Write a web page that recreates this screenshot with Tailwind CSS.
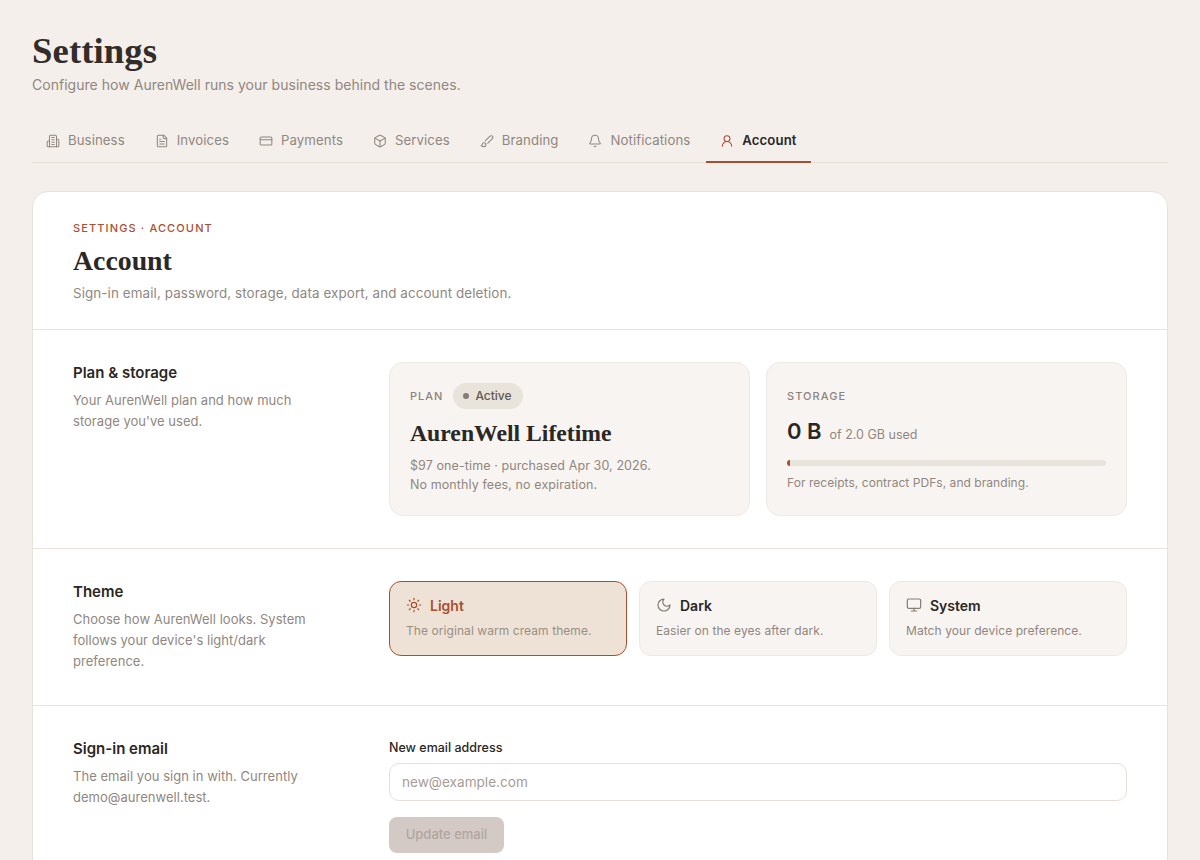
<!DOCTYPE html>
<html lang="en">
<head>
<meta charset="utf-8">
<title>Settings</title>
<script src="https://cdn.jsdelivr.net/npm/@tailwindcss/browser@4"></script>
</head>
<body class="bg-[#f4efeb] font-['Inter','Noto_Sans',sans-serif] text-[#2b2724] overflow-hidden h-[860px]">
<main class="px-8 pt-[33px]">
  <h1 class="font-['Liberation_Serif',serif] font-bold text-[36.700px] leading-[36px] tracking-[0.1px] text-[#332d29]">Settings</h1>
  <p class="mt-[6px] text-[14px] leading-[20px] tracking-[0.03px] text-[#90877f]">Configure how AurenWell runs your business behind the scenes.</p>

  <nav class="mt-[24px] flex gap-[2px] h-[44px] border-b border-[#e6e0d9] text-[13.200px] tracking-[0.09px] text-[#90877f]">
    <a class="flex items-center gap-[8px] px-[14px]">
      <svg class="size-[14px]" viewBox="0 0 24 24" fill="none" stroke="currentColor" stroke-width="1.8" stroke-linecap="round" stroke-linejoin="round"><path d="M6 22V4a2 2 0 0 1 2-2h8a2 2 0 0 1 2 2v18Z"/><path d="M6 12H4a2 2 0 0 0-2 2v6a2 2 0 0 0 2 2h2"/><path d="M18 9h2a2 2 0 0 1 2 2v9a2 2 0 0 1-2 2h-2"/><path d="M10 6h4M10 10h4M10 14h4M10 18h4"/></svg>
      <span>Business</span></a>
    <a class="flex items-center gap-[8px] px-[14px]">
      <svg class="size-[14px]" viewBox="0 0 24 24" fill="none" stroke="currentColor" stroke-width="1.8" stroke-linecap="round" stroke-linejoin="round"><path d="M15 2H6a2 2 0 0 0-2 2v16a2 2 0 0 0 2 2h12a2 2 0 0 0 2-2V7Z"/><path d="M14 2v4a2 2 0 0 0 2 2h4"/><path d="M10 9H8M16 13H8M16 17H8"/></svg>
      <span>Invoices</span></a>
    <a class="flex items-center gap-[8px] px-[14px]">
      <svg class="size-[14px]" viewBox="0 0 24 24" fill="none" stroke="currentColor" stroke-width="1.8" stroke-linecap="round" stroke-linejoin="round"><rect x="2" y="5" width="20" height="14" rx="2"/><path d="M2 10h20"/></svg>
      <span>Payments</span></a>
    <a class="flex items-center gap-[8px] px-[14px]">
      <svg class="size-[14px]" viewBox="0 0 24 24" fill="none" stroke="currentColor" stroke-width="1.8" stroke-linecap="round" stroke-linejoin="round"><path d="M21 8a2 2 0 0 0-1-1.730l-7-4a2 2 0 0 0-2 0l-7 4A2 2 0 0 0 3 8v8a2 2 0 0 0 1 1.730l7 4a2 2 0 0 0 2 0l7-4A2 2 0 0 0 21 16Z"/><path d="m3.300 7 8.700 5 8.700-5"/><path d="M12 22V12"/></svg>
      <span>Services</span></a>
    <a class="flex items-center gap-[8px] px-[14px]">
      <svg class="size-[14px]" viewBox="0 0 24 24" fill="none" stroke="currentColor" stroke-width="1.8" stroke-linecap="round" stroke-linejoin="round"><path d="m9.060 11.900 8.070-8.060a2.850 2.850 0 1 1 4.030 4.030l-8.060 8.080"/><path d="M7.070 14.940c-1.660 0-3 1.350-3 3.020 0 1.330-2.500 1.520-2 2.020 1.080 1.100 2.490 2.020 4 2.020 2.200 0 4-1.800 4-4.040a3.010 3.010 0 0 0-3-3.020z"/></svg>
      <span>Branding</span></a>
    <a class="flex items-center gap-[8px] px-[14px]">
      <svg class="size-[14px]" viewBox="0 0 24 24" fill="none" stroke="currentColor" stroke-width="1.8" stroke-linecap="round" stroke-linejoin="round"><path d="M10.300 21a2 2 0 0 0 3.400 0"/><path d="M3.300 15.300A1 1 0 0 0 4 17h16a1 1 0 0 0 .7-1.700C19.400 14 18 12.500 18 8A6 6 0 0 0 6 8c0 4.500-1.400 6-2.700 7.300"/></svg>
      <span>Notifications</span></a>
    <a class="relative flex items-center gap-[8px] px-[14px] font-semibold text-[#2b2724]">
      <svg class="size-[14px] text-[#a94f31]" viewBox="0 0 24 24" fill="none" stroke="currentColor" stroke-width="1.8" stroke-linecap="round" stroke-linejoin="round"><circle cx="12" cy="8" r="5"/><path d="M20 21a8 8 0 0 0-16 0"/></svg>
      <span>Account</span>
      <span class="absolute left-0 right-0 -bottom-px h-[2px] bg-[#a94f31]"></span></a>
  </nav>

  <section class="mt-[28px] rounded-t-[16px] border border-[#e9e3dc] bg-white">
    <header class="h-[138px] border-b border-[#e9e3dc] px-[40px] pt-[29px]">
      <p class="text-[11px] leading-[14px] tracking-[1.130px] font-medium text-[#a94f31]">SETTINGS · ACCOUNT</p>
      <h2 class="mt-[9px] font-['Liberation_Serif',serif] font-bold text-[27.800px] leading-[34px] text-[#2b2724]">Account</h2>
      <p class="mt-[5px] text-[13.400px] leading-[20px] tracking-[0.100px] text-[#90877f]">Sign-in email, password, storage, data export, and account deletion.</p>
    </header>

    <div class="flex h-[219px] border-b border-[#e9e3dc] px-[40px] pt-[32px]">
      <div class="w-[316px] shrink-0 pr-[76px]">
        <h3 class="text-[15px] leading-[22px] font-semibold">Plan &amp; storage</h3>
        <p class="mt-[6px] text-[13px] leading-[21px] tracking-[0.030px] text-[#90877f]">Your AurenWell plan and how much storage you've used.</p>
      </div>
      <div class="flex flex-1 gap-[16px] h-[154px]">
        <div class="flex-1 rounded-[14px] border border-[#efe9e3] bg-[#f8f4f1] px-[20px] pt-[20px]">
          <div class="flex items-center gap-[10px] h-[26px]">
            <span class="text-[11px] tracking-[1px] font-medium text-[#8c837c]">PLAN</span>
            <span class="flex items-center gap-[6px] h-[26px] rounded-full bg-[#e8e3db] pl-[10px] pr-[11px] text-[12px] font-medium text-[#5f5750]"><i class="size-[6px] rounded-full bg-[#857c74]"></i>Active</span>
          </div>
          <p class="mt-[8px] font-['Liberation_Serif',serif] font-bold text-[23.700px] leading-[32px] text-[#2b2724]">AurenWell Lifetime</p>
          <p class="mt-[7px] text-[12.500px] leading-[19px] tracking-[0.100px] text-[#90877f]">$97 one-time · purchased Apr 30, 2026.<br>No monthly fees, no expiration.</p>
        </div>
        <div class="flex-1 rounded-[14px] border border-[#efe9e3] bg-[#f8f4f1] px-[20px] pt-[26px]">
          <p class="text-[11px] leading-[14px] tracking-[1.050px] font-medium text-[#8c837c]">STORAGE</p>
          <p class="mt-[12px] flex items-baseline gap-[8px] h-[32px]"><span class="text-[22px] font-semibold text-[#2b2724]">0 B</span><span class="text-[12.500px] text-[#90877f]">of 2.0 GB used</span></p>
          <div class="mt-[13px] h-[6px] rounded-full bg-[#e8e3db] overflow-hidden"><div class="h-full w-[3px] bg-[#a94f31]"></div></div>
          <p class="mt-[8px] text-[12px] leading-[18px] tracking-[0.050px] text-[#90877f]">For receipts, contract PDFs, and branding.</p>
        </div>
      </div>
    </div>

    <div class="flex h-[157px] border-b border-[#e9e3dc] px-[40px] pt-[32px]">
      <div class="w-[316px] shrink-0 pr-[76px]">
        <h3 class="text-[15px] leading-[22px] font-semibold">Theme</h3>
        <p class="mt-[6px] text-[13px] leading-[21px] tracking-[0.030px] text-[#90877f]">Choose how AurenWell looks. System follows your device's light/dark preference.</p>
      </div>
      <div class="flex flex-1 gap-[12px] h-[75px]">
        <div class="flex-1 rounded-[12px] border border-[#a94f31] bg-[#eee2d6] px-[16px] pt-[14px]">
          <div class="flex items-center gap-[8px] h-[20px] -mt-px text-[14px] font-semibold text-[#a94f31]">
            <svg class="size-[16px]" viewBox="0 0 24 24" fill="none" stroke="currentColor" stroke-width="1.8" stroke-linecap="round" stroke-linejoin="round"><circle cx="12" cy="12" r="4"/><path d="M12 2v2M12 20v2M4.930 4.930l1.410 1.410M17.660 17.660l1.410 1.410M2 12h2M20 12h2M6.340 17.660l-1.410 1.410M19.070 4.930l-1.410 1.410"/></svg>Light</div>
          <p class="mt-[7px] text-[12px] leading-[18px] tracking-[0.070px] text-[#9a8e84]">The original warm cream theme.</p>
        </div>
        <div class="flex-1 rounded-[12px] border border-[#efe9e3] bg-[#f8f4f1] px-[16px] pt-[14px]">
          <div class="flex items-center gap-[8px] h-[20px] -mt-px text-[14px] font-semibold text-[#2b2724]">
            <svg class="size-[16px] text-[#857c74]" viewBox="0 0 24 24" fill="none" stroke="currentColor" stroke-width="1.8" stroke-linecap="round" stroke-linejoin="round"><path d="M12 3a6 6 0 0 0 9 9 9 9 0 1 1-9-9Z"/></svg>Dark</div>
          <p class="mt-[7px] text-[12px] leading-[18px] tracking-[0.070px] text-[#90877f]">Easier on the eyes after dark.</p>
        </div>
        <div class="flex-1 rounded-[12px] border border-[#efe9e3] bg-[#f8f4f1] px-[16px] pt-[14px]">
          <div class="flex items-center gap-[8px] h-[20px] -mt-px text-[14px] font-semibold text-[#2b2724]">
            <svg class="size-[16px] text-[#857c74]" viewBox="0 0 24 24" fill="none" stroke="currentColor" stroke-width="1.8" stroke-linecap="round" stroke-linejoin="round"><rect x="2" y="3" width="20" height="14" rx="2"/><path d="M8 21h8M12 17v4"/></svg>System</div>
          <p class="mt-[7px] text-[12px] leading-[18px] tracking-[0.070px] text-[#90877f]">Match your device preference.</p>
        </div>
      </div>
    </div>

    <div class="flex px-[40px] pt-[32px] pb-[32px]">
      <div class="w-[316px] shrink-0 pr-[76px]">
        <h3 class="text-[15px] leading-[22px] font-semibold">Sign-in email</h3>
        <p class="mt-[6px] text-[13px] leading-[21px] tracking-[0.030px] text-[#90877f]">The email you sign in with. Currently demo@aurenwell.test.</p>
      </div>
      <div class="flex-1">
        <label class="block text-[12.500px] leading-[20px] font-medium text-[#2b2724]">New email address</label>
        <input class="mt-[5px] block w-full h-[38px] rounded-[10px] border border-[#e6e0d9] bg-white px-[12px] text-[13.600px] placeholder:text-[#a69c94]" placeholder="new@example.com">
        <button class="mt-[16px] block h-[36px] w-[115px] rounded-[8px] bg-[#d3cac5] text-[13px] font-medium text-[#b0a69f]">Update email</button>
      </div>
    </div>
  </section>
</main>
</body>
</html>
